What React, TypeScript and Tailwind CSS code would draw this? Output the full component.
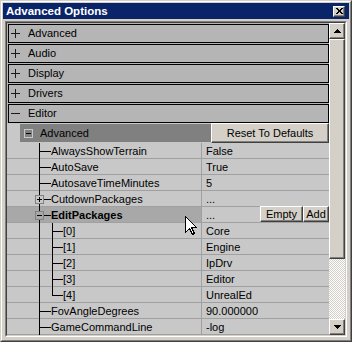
import React from 'react';

type Kind = 'leaf' | 'plus' | 'minus' | 'child' | 'last';

interface PropRow {
    name: string;
    value: string;
    kind: Kind;
    bold?: boolean;
    active?: boolean;
    buttons?: boolean;
}

const categories = ['Advanced', 'Audio', 'Display', 'Drivers'];

const props: PropRow[] = [
    { name: 'AlwaysShowTerrain', value: 'False', kind: 'leaf' },
    { name: 'AutoSave', value: 'True', kind: 'leaf' },
    { name: 'AutosaveTimeMinutes', value: '5', kind: 'leaf' },
    { name: 'CutdownPackages', value: '...', kind: 'plus' },
    { name: 'EditPackages', value: '...', kind: 'minus', bold: true, active: true, buttons: true },
    { name: '[0]', value: 'Core', kind: 'child' },
    { name: '[1]', value: 'Engine', kind: 'child' },
    { name: '[2]', value: 'IpDrv', kind: 'child' },
    { name: '[3]', value: 'Editor', kind: 'child' },
    { name: '[4]', value: 'UnrealEd', kind: 'last' },
    { name: 'FovAngleDegrees', value: '90.000000', kind: 'leaf' },
    { name: 'GameCommandLine', value: '-log', kind: 'leaf' },
];

// classic raised 3d edge
const raised =
    'bg-[#d4d0c8] border border-t-white border-l-white border-r-[#404040] border-b-[#404040] shadow-[inset_-1px_-1px_0_#808080]';

const Sign = ({ minus }: { minus?: boolean }) => (
    <svg width="9" height="9" className="shrink-0" shapeRendering="crispEdges">
        <line x1="0" y1="4.5" x2="9" y2="4.5" stroke="#1a1a1a" />
        {!minus && <line x1="4.5" y1="0" x2="4.5" y2="9" stroke="#1a1a1a" />}
    </svg>
);

const Tree = ({ kind }: { kind: Kind }) => {
    const child = kind === 'child' || kind === 'last';
    const box = kind === 'plus' || kind === 'minus';
    return (
        <svg width={child ? 56 : 44} height="16" className="shrink-0 overflow-visible" shapeRendering="crispEdges">
            {box ? (
                <>
                    <line x1="32.5" y1="0" x2="32.5" y2="4" stroke="#000" />
                    <line x1="32.5" y1="13" x2="32.5" y2="16" stroke="#000" />
                    <rect x="28.5" y="4.5" width="8" height="8" fill="none" stroke="#808080" />
                    <line x1="30" y1="8.5" x2="35" y2="8.5" stroke="#000" />
                    {kind === 'plus' && <line x1="32.5" y1="6" x2="32.5" y2="11" stroke="#000" />}
                    <line x1="37" y1="8.5" x2="44" y2="8.5" stroke="#000" />
                </>
            ) : (
                <line x1="32.5" y1="0" x2="32.5" y2="16" stroke="#000" />
            )}
            {kind === 'leaf' && <line x1="32" y1="8.5" x2="44" y2="8.5" stroke="#000" />}
            {child && (
                <>
                    <line x1="45.5" y1="0" x2="45.5" y2={kind === 'last' ? 9 : 16} stroke="#000" />
                    <line x1="45" y1="8.5" x2="56" y2="8.5" stroke="#000" />
                </>
            )}
        </svg>
    );
};

const Cursor = () => (
    <svg width="13" height="21" className="absolute left-[185px] top-[216px]" shapeRendering="crispEdges">
        <path
            d="M0.5 0.5 L0.5 16.5 L4.5 12.5 L7.5 18.5 L9.5 17.5 L6.5 11.5 L11.5 11.5 Z"
            fill="#fff"
            stroke="#000"
        />
    </svg>
);

export default function App() {
    return (
        <div className="relative h-[342px] w-[352px] overflow-hidden font-['Liberation_Sans',Arial,sans-serif] text-[11px] text-black">
            {/* Window frame */}
            <div className="flex h-full flex-col border border-t-[#d4d0c8] border-l-[#d4d0c8] border-r-[#404040] border-b-[#404040] bg-[#d4d0c8]">
                <div className="flex flex-1 flex-col border border-t-white border-l-white border-r-[#808080] border-b-[#808080] p-px">
                    {/* Title bar */}
                    <div className="flex h-[16px] shrink-0 items-center bg-[#0a246a] pl-[3px] pr-[4px]">
                        <span className="text-[11.5px] font-bold leading-[16px] text-white">Advanced Options</span>
                        <div className={`ml-auto flex h-[11px] w-[12px] items-center justify-center ${raised}`}>
                            <svg width="7" height="6" shapeRendering="crispEdges">
                                <path
                                    d="M0 0h2v1h-2z M5 0h2v1h-2z M1 1h2v1h-2z M4 1h2v1h-2z M2 2h3v2h-3z M1 4h2v1h-2z M4 4h2v1h-2z M0 5h2v1h-2z M5 5h2v1h-2z"
                                    fill="#000"
                                />
                            </svg>
                        </div>
                    </div>

                    {/* Sunken list */}
                    <div className="m-[2px] flex min-h-0 flex-1 border border-t-[#808080] border-l-[#808080] border-r-white border-b-white">
                        <div className="flex min-h-0 flex-1 border border-t-[#404040] border-l-[#404040] border-r-[#d4d0c8] border-b-[#d4d0c8]">
                            {/* Content panel */}
                            <div className="flex min-w-0 flex-1 flex-col overflow-hidden bg-[#b5b5b5]">
                                {categories.map(c => (
                                    <div key={c} className="ml-px mt-px flex h-[19px] shrink-0 items-center border border-black bg-[#b5b5b5]">
                                        <span className="ml-[2px]"><Sign /></span>
                                        <span className="ml-[8px] leading-[17px]">{c}</span>
                                    </div>
                                ))}
                                <div className="ml-px mt-px flex h-[19px] shrink-0 items-center border border-black bg-[#b5b5b5]">
                                    <span className="ml-[2px]"><Sign minus /></span>
                                    <span className="ml-[8px] leading-[17px]">Editor</span>
                                </div>

                                {/* Editor contents */}
                                <div className="flex flex-1 flex-col bg-[#c8c8c8]">
                                    <div className="flex h-[20px] shrink-0 items-center">
                                        <div className="ml-[13px] flex h-[18px] flex-1 items-center bg-[#808080]">
                                            <svg width="9" height="9" className="ml-[4px] shrink-0" shapeRendering="crispEdges">
                                                <rect x="0.5" y="0.5" width="8" height="8" fill="none" stroke="#c8c8c8" />
                                                <line x1="2" y1="4.5" x2="7" y2="4.5" stroke="#000" />
                                            </svg>
                                            <span className="ml-[7px] leading-[18px]">Advanced</span>
                                        </div>
                                        <button className={`flex h-[20px] w-[118px] items-center justify-center leading-[18px] ${raised}`}>
                                            Reset To Defaults
                                        </button>
                                    </div>

                                    {props.map(p => (
                                        <div key={p.name} className="flex h-[16px] shrink-0 border-b border-[#a0a0a0]">
                                            <div className={`flex w-[194px] shrink-0 items-start ${p.active ? 'bg-[#a8a8a8]' : ''}`}>
                                                <Tree kind={p.kind} />
                                                <span className={`pt-[2px] leading-[13px] ${p.bold ? 'font-bold' : ''}`}>{p.name}</span>
                                            </div>
                                            <div className="flex flex-1 items-start border-l border-[#a0a0a0] pl-[4px]">
                                                <span className="pt-[2px] leading-[13px]">{p.value}</span>
                                                {p.buttons && (
                                                    <div className="-mt-px ml-auto flex">
                                                        <button className={`flex h-[16px] w-[43px] items-center justify-center leading-[14px] ${raised}`}>
                                                            Empty
                                                        </button>
                                                        <button className={`flex h-[16px] w-[26px] items-center justify-center leading-[14px] ${raised}`}>
                                                            Add
                                                        </button>
                                                    </div>
                                                )}
                                            </div>
                                        </div>
                                    ))}
                                </div>
                            </div>

                            {/* Scrollbar */}
                            <div className="flex w-[16px] shrink-0 flex-col bg-[#d4d0c8]">
                                <div className={`flex h-[16px] shrink-0 items-center justify-center ${raised}`}>
                                    <svg width="7" height="4" shapeRendering="crispEdges">
                                        <path d="M3 0h1v1h-1z M2 1h3v1h-3z M1 2h5v1h-5z M0 3h7v1h-7z" fill="#000" />
                                    </svg>
                                </div>
                                <div className={`h-[220px] shrink-0 ${raised}`} />
                                <div className="flex-1 bg-[image:repeating-conic-gradient(#ffffff_0_25%,#d4d0c8_0_50%)] bg-[length:2px_2px]" />
                                <div className={`flex h-[16px] shrink-0 items-center justify-center ${raised}`}>
                                    <svg width="7" height="4" shapeRendering="crispEdges">
                                        <path d="M0 0h7v1h-7z M1 1h5v1h-5z M2 2h3v1h-3z M3 3h1v1h-1z" fill="#000" />
                                    </svg>
                                </div>
                            </div>
                        </div>
                    </div>
                </div>
            </div>

            <Cursor />
        </div>
    );
}
